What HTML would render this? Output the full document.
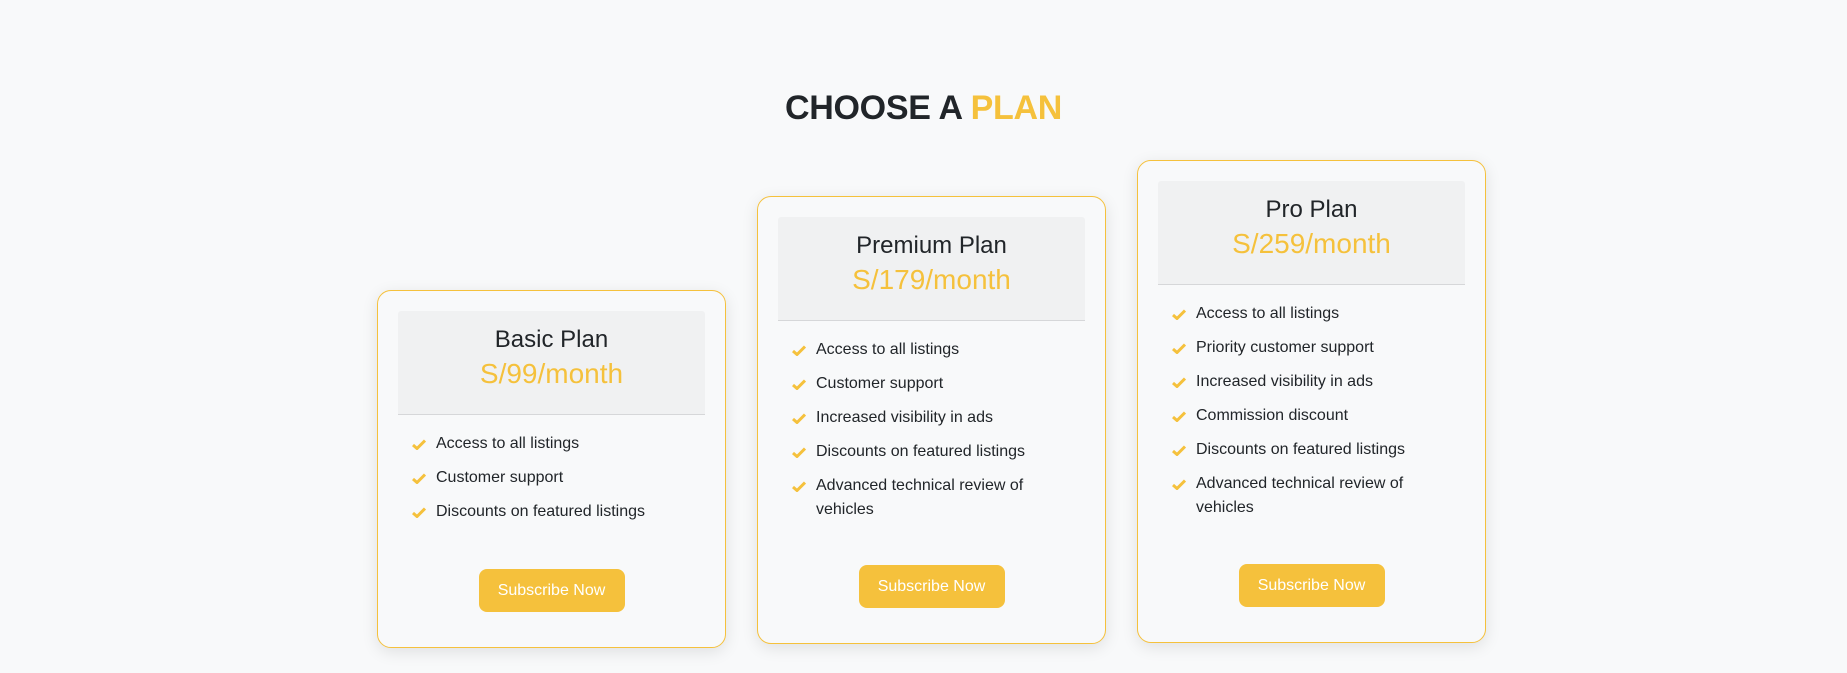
<!DOCTYPE html>
<html><head><style>
*{margin:0;padding:0;box-sizing:border-box}
body{width:1847px;height:673px;background:#f8f9fa;font-family:"Liberation Sans",Arial,sans-serif;position:relative;overflow:hidden}
h1{position:absolute;top:86px;left:0;width:1847px;text-align:center;font-size:34px;font-weight:bold;color:#212529;line-height:44px;letter-spacing:-0.3px}
h1 span{color:#f5c13c}
.card{position:absolute;width:349px;background:#f8f9fa;border:1px solid #f5c13c;border-radius:14px;box-shadow:0 4px 16px rgba(0,0,0,.1);padding:20px}
.hd{height:104px;background:#f0f1f2;border-bottom:1px solid #d6d7d9;border-radius:3px 3px 0 0;text-align:center;padding-top:15px}
.t{font-size:24px;color:#212529;line-height:28px}
.p{font-size:28px;color:#f5c13c;line-height:36px;margin-top:2px}
ul{list-style:none;margin-top:17px;padding-left:14px}
li{position:relative;padding-left:24px;font-size:16px;line-height:24px;color:#212529;margin-bottom:10px;padding-right:20px}
li svg{position:absolute;left:0;top:7px}
.b{position:absolute;bottom:35px;left:50%;transform:translateX(-50%);width:146px;height:43px;background:#f5c13c;color:#fff;border-radius:8px;font-size:16px;line-height:43px;text-align:center}
</style></head><body>
<h1>CHOOSE A <span>PLAN</span></h1>
<div class="card" style="left:377px;top:290px;height:358px">
<div class="hd"><div class="t">Basic Plan</div><div class="p">S/99/month</div></div>
<ul>
<li><svg width="14" height="11" viewBox="0 0 14 11"><path d="M1 6l4 3.5L13 1.5" fill="none" stroke="#f5c13c" stroke-width="3"/></svg>Access to all listings</li>
<li><svg width="14" height="11" viewBox="0 0 14 11"><path d="M1 6l4 3.5L13 1.5" fill="none" stroke="#f5c13c" stroke-width="3"/></svg>Customer support</li>
<li><svg width="14" height="11" viewBox="0 0 14 11"><path d="M1 6l4 3.5L13 1.5" fill="none" stroke="#f5c13c" stroke-width="3"/></svg>Discounts on featured listings</li>
</ul>
<div class="b">Subscribe Now</div>
</div>
<div class="card" style="left:757px;top:196px;height:448px">
<div class="hd"><div class="t">Premium Plan</div><div class="p">S/179/month</div></div>
<ul>
<li><svg width="14" height="11" viewBox="0 0 14 11"><path d="M1 6l4 3.5L13 1.5" fill="none" stroke="#f5c13c" stroke-width="3"/></svg>Access to all listings</li>
<li><svg width="14" height="11" viewBox="0 0 14 11"><path d="M1 6l4 3.5L13 1.5" fill="none" stroke="#f5c13c" stroke-width="3"/></svg>Customer support</li>
<li><svg width="14" height="11" viewBox="0 0 14 11"><path d="M1 6l4 3.5L13 1.5" fill="none" stroke="#f5c13c" stroke-width="3"/></svg>Increased visibility in ads</li>
<li><svg width="14" height="11" viewBox="0 0 14 11"><path d="M1 6l4 3.5L13 1.5" fill="none" stroke="#f5c13c" stroke-width="3"/></svg>Discounts on featured listings</li>
<li><svg width="14" height="11" viewBox="0 0 14 11"><path d="M1 6l4 3.5L13 1.5" fill="none" stroke="#f5c13c" stroke-width="3"/></svg>Advanced technical review of vehicles</li>
</ul>
<div class="b">Subscribe Now</div>
</div>
<div class="card" style="left:1137px;top:160px;height:483px">
<div class="hd"><div class="t">Pro Plan</div><div class="p">S/259/month</div></div>
<ul>
<li><svg width="14" height="11" viewBox="0 0 14 11"><path d="M1 6l4 3.5L13 1.5" fill="none" stroke="#f5c13c" stroke-width="3"/></svg>Access to all listings</li>
<li><svg width="14" height="11" viewBox="0 0 14 11"><path d="M1 6l4 3.5L13 1.5" fill="none" stroke="#f5c13c" stroke-width="3"/></svg>Priority customer support</li>
<li><svg width="14" height="11" viewBox="0 0 14 11"><path d="M1 6l4 3.5L13 1.5" fill="none" stroke="#f5c13c" stroke-width="3"/></svg>Increased visibility in ads</li>
<li><svg width="14" height="11" viewBox="0 0 14 11"><path d="M1 6l4 3.5L13 1.5" fill="none" stroke="#f5c13c" stroke-width="3"/></svg>Commission discount</li>
<li><svg width="14" height="11" viewBox="0 0 14 11"><path d="M1 6l4 3.5L13 1.5" fill="none" stroke="#f5c13c" stroke-width="3"/></svg>Discounts on featured listings</li>
<li><svg width="14" height="11" viewBox="0 0 14 11"><path d="M1 6l4 3.5L13 1.5" fill="none" stroke="#f5c13c" stroke-width="3"/></svg>Advanced technical review of vehicles</li>
</ul>
<div class="b">Subscribe Now</div>
</div>
</body></html>
